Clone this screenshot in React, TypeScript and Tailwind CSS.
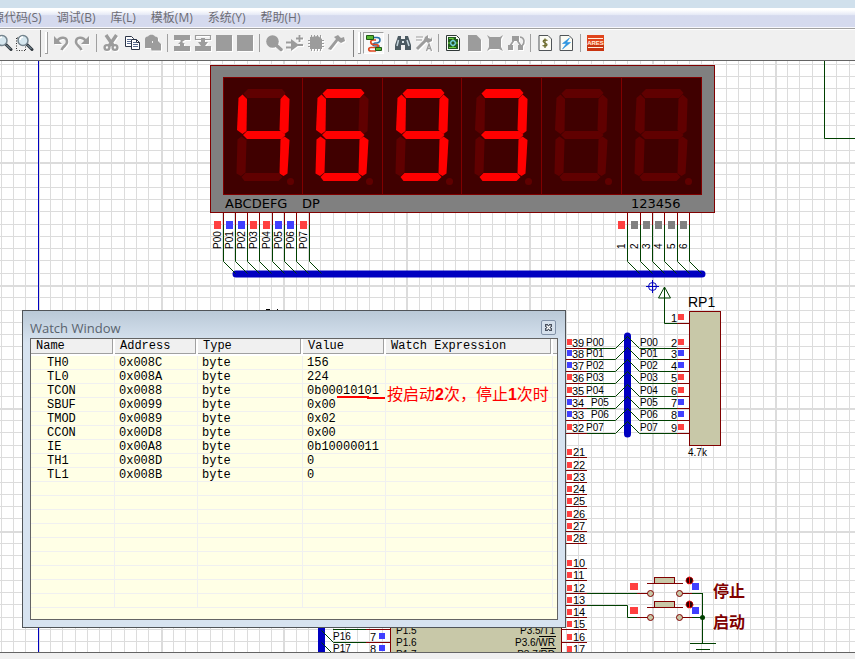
import { Fragment, type ReactNode } from "react";
import { clsx } from "clsx";

const WIRE = "#004000";
const PIN = "#800000";
const BUS = "#0000c0";
const BODY = "#c8c8a8";
const HIGH = "#ff4040";
const LOW = "#4040ff";
const FLOAT = "#808080";

const menus = ["源代码(S)", "调试(B)", "库(L)", "模板(M)", "系统(Y)", "帮助(H)"];

interface WatchItem {
  name: string;
  address: string;
  type: string;
  value: string;
}

const watchItems: WatchItem[] = [
  { name: "TH0", address: "0x008C", type: "byte", value: "156" },
  { name: "TL0", address: "0x008A", type: "byte", value: "224" },
  { name: "TCON", address: "0x0088", type: "byte", value: "0b00010101" },
  { name: "SBUF", address: "0x0099", type: "byte", value: "0x00" },
  { name: "TMOD", address: "0x0089", type: "byte", value: "0x02" },
  { name: "CCON", address: "0x00D8", type: "byte", value: "0x00" },
  { name: "IE", address: "0x00A8", type: "byte", value: "0b10000011" },
  { name: "TH1", address: "0x008D", type: "byte", value: "0" },
  { name: "TL1", address: "0x008B", type: "byte", value: "0" },
];

/* ---------- toolbar ---------- */

function Tool({ label, off, active, children }: { label: string; off?: boolean; active?: boolean; children: ReactNode }) {
  return (
    <button
      type="button"
      aria-label={label}
      title={label}
      className={clsx(
        "flex h-[22px] w-[21px] shrink-0 items-center justify-center",
        active && "border border-[#a0a0a0] border-r-white border-b-white bg-[#f8f8f8]"
      )}
    >
      <svg
        viewBox="0 0 20 20"
        className={clsx("h-5 w-5 shrink-0", off && "text-[#9c9c9c] drop-shadow-[1px_1px_0_#ffffff]")}
        fill="currentColor"
      >
        {children}
      </svg>
    </button>
  );
}

function Separator() {
  return (
    <div className="flex h-[18px] w-2 shrink-0 justify-center">
      <div className="w-px bg-[#a0a0a0]" />
    </div>
  );
}

function Gripper() {
  return (
    <div className="flex h-7 w-4 shrink-0 items-center justify-end gap-1 pr-[2px]">
      <div className="h-[27px] w-px bg-[#808080]" />
      <div className="h-[22px] w-[3px] border-r border-b border-[#a0a0a0] bg-white" />
    </div>
  );
}

const magnifier = (
  <>
    <path d="M13 11.500l5 5" stroke="#333a40" strokeWidth="3" strokeLinecap="round" />
    <path d="M13.500 12l4 4" stroke="#8fa8b4" strokeWidth="1" />
    <circle cx="9" cy="7.500" r="5" fill="#d5e6ee" stroke="#74848e" strokeWidth="1.500" />
    <path d="M6 7a3 3 0 0 1 3-3" stroke="#fff" strokeWidth="1.500" fill="none" />
  </>
);

const page = <path d="M4 2.500h9l3.500 3.500v11.500H4z" fill="#fbfbf4" stroke="#505458" />;

function Toolbar() {
  return (
    <div role="toolbar" className="flex h-[31px] items-center overflow-hidden border-b border-[#646464] bg-[#f0f0f0] pb-1">
      <div className="-ml-2 flex items-center">
        <Tool label="Zoom out">{magnifier}</Tool>
        <Tool label="Zoom area">
          <path d="M2.500 5v12.500h9" stroke="#303030" strokeDasharray="1 1.500" fill="none" />
          <path d="M3 5h4M11.500 17v-5" stroke="#303030" strokeDasharray="1 1.500" fill="none" />
          {magnifier}
        </Tool>
        <Gripper />
        <Tool label="Undo" off>
          <path d="M3 3v8h8z" />
          <path d="M6 8C9 3.500 16 3.500 16 9c0 3.500-4 4-5.500 8" fill="none" stroke="currentColor" strokeWidth="2.600" />
        </Tool>
        <Tool label="Redo" off>
          <path d="M17 3v8H9z" />
          <path d="M14 8C11 3.500 4 3.500 4 9c0 3.500 4 4 5.500 8" fill="none" stroke="currentColor" strokeWidth="2.600" />
        </Tool>
        <Separator />
        <Tool label="Cut" off>
          <path d="M5 2l7.500 11M15.500 2L8 13" stroke="currentColor" strokeWidth="3.400" />
          <circle cx="6" cy="14.500" r="2.400" fill="none" stroke="currentColor" strokeWidth="2.400" />
          <circle cx="14" cy="14.500" r="2.400" fill="none" stroke="currentColor" strokeWidth="2.400" />
        </Tool>
        <Tool label="Copy">
          <path d="M3.500 3.500h6l2 2v8h-8z" fill="#fff" stroke="#2c3548" />
          <path d="M5 6.500h4M5 8.500h4M5 10.500h4" stroke="#5a6c90" />
          <path d="M9.500 6.500h5l3 3v7h-8z" fill="#fff" stroke="#2c3548" />
          <path d="M11 9.500h3M11 11.500h5M11 13.500h5" stroke="#5a6c90" />
          <path d="M14.500 6.500v3h3" fill="none" stroke="#2c3548" />
        </Tool>
        <Tool label="Paste" off>
          <path d="M2 6c0-2 2-2.500 3-2.500 1-2.500 6-2.500 7 0 2 0 3 1 3 2.500v2l3 3v6.500H8.500L8 15H2z" />
          <path d="M9.500 8v2" stroke="#f0f0f0" />
        </Tool>
        <Separator />
        <Tool label="Block copy" off>
          <path d="M2 2h16v5h-5l-3 2 3 2h-1v2h6v5H2v-5h6v-2H6l3-3-1-1H2z" />
        </Tool>
        <Tool label="Block move" off>
          <path d="M2.500 2.500h15v4h-15z" fill="none" stroke="currentColor" strokeWidth="1.200" />
          <path d="M8 5h4v4h3l-3 4h6v5H2v-5h6L5 9h3z" />
        </Tool>
        <Tool label="Block rotate" off>
          <path d="M2 2h16v16H2z" />
        </Tool>
        <Tool label="Block delete" off>
          <path d="M2 2h16v16H2z" />
        </Tool>
        <Separator />
        <Tool label="Pick parts" off>
          <circle cx="8.500" cy="8.500" r="6.300" />
          <path d="M12 12l5 4.500" stroke="currentColor" strokeWidth="3.500" strokeLinecap="round" />
        </Tool>
        <Tool label="Make device" off>
          <path d="M6 6l8 6-8 6z" />
          <path d="M1 9.500h6M1 14.500h6M13 12h5M11 5.500h7M14.500 2v7" stroke="currentColor" strokeWidth="1.800" />
        </Tool>
        <Tool label="Packaging tool" off>
          <path d="M4 4l8-1 4 3v10H4z" />
          <path d="M5.500 2v16M8.500 2v16M11.500 2v16M14.500 2v16M2 7.500h16M2 10.500h16M2 13.500h16" stroke="currentColor" />
        </Tool>
        <Tool label="Decompose" off>
          <path d="M7 4l4-2 3 3 3-1 1 4-4 2-3-2L4 17l-3-1 8-10z" />
        </Tool>
        <Gripper />
        <Tool label="Wire autorouter" active>
          <path d="M9 4.500h4c4 0 4 5 0 5.500h-2c-3 1-3 3 1 3h3v2" fill="none" stroke="#2870a8" strokeWidth="1.500" />
          <path d="M12 7H9c-3 0-3 4 0 4.500h3c3 0 3 3 0 3H7c-3 0-3 3.500 0 3.500h5" fill="none" stroke="#e04820" strokeWidth="1.700" />
          <path d="M2.500 2.500h7v4h-7zM11.500 14.500h6v3h-6z" fill="#58b830" stroke="#205818" />
        </Tool>
        <Separator />
        <Tool label="Search and tag">
          <path d="M5 3h3v3h4V3h3l3 9v5h-6v-5H8v5H2v-5z" fill="#4c5a62" />
          <path d="M5.500 7L4 13M14 7l2 6" stroke="#c4d4dc" strokeWidth="1.500" />
          <path d="M9 8h2v2H9z" fill="#dde6ea" />
        </Tool>
        <Tool label="Property assignment" off>
          <path d="M2 4h7M2 7h6" stroke="currentColor" strokeWidth="1.200" />
          <path d="M3 16L13 6" stroke="currentColor" strokeWidth="3" />
          <path d="M11 4l3-2v3l3 1 1-2v4l-4 2-4-3z" />
          <path d="M12.500 18l2.500-7 2.500 7M13.500 15.500h3" fill="none" stroke="currentColor" strokeWidth="1.300" />
        </Tool>
        <Separator />
        <Tool label="Design explorer">
          <path d="M3.500 2.500h10l3 3v12h-13z" fill="#f8fbf4" stroke="#303838" />
          <path d="M5 4h8v2h2v10H5z" fill="#205820" />
          <path d="M6 5.500h4M6 14.500h7M10 5v10M5 10h10" stroke="#6bd03c" strokeWidth="1.200" />
          <circle cx="10" cy="10" r="2.300" fill="#205820" stroke="#7ad8e8" strokeWidth="1.200" />
        </Tool>
        <Tool label="New sheet" off>
          <path d="M4 2h8.500L17 6.500V18H4z" />
        </Tool>
        <Tool label="Remove sheet" off>
          <path d="M2 2l3 2h10l3-2-2 4v8l2 4-4-2H5l-3 2 2-4V6z" />
        </Tool>
        <Tool label="Exit to parent" off>
          <path d="M6 3h7v5H6zM2 12h5v5H2zM12 12h5v5h-5z" />
          <path d="M8 7l-4 6M11 7l4 6M14 4c5 1 5 6 2 9" fill="none" stroke="currentColor" strokeWidth="1.600" />
        </Tool>
        <Separator />
        <Tool label="Bill of materials">
          {page}
          <path d="M12.500 7.500c-4-1.500-6 1-2.500 2.500s2 4-2.500 2.500M10 5.500v9.500" fill="none" stroke="#6b6a28" strokeWidth="1.300" />
        </Tool>
        <Tool label="Electrical rules check">
          {page}
          <path d="M13.500 5L6.500 10.500h4L6.500 16l8-6.500h-4z" fill="#2a94e0" stroke="#2a94e0" strokeWidth=".6" />
        </Tool>
        <Separator />
        <Tool label="ARES">
          <path d="M2 2h17v16H2z" fill="#e0441c" />
          <path d="M2 12h17v6H2z" fill="#c93410" />
          <path d="M3 5.500h15M3 14.500h15" stroke="#ffeedd" />
          <text x="10.500" y="12" textAnchor="middle" className="fill-[#ffeedd] font-['Liberation_Sans',sans-serif] text-[6px] font-bold">
            ARES
          </text>
        </Tool>
      </div>
    </div>
  );
}

/* ---------- schematic ---------- */

// outlines of one seven segment digit, relative to the left edge of its cell
const segments: Record<string, string> = {
  a: "25,89 59,89 62.500,93 58,98 24,98 20.500,93.500",
  b: "61.500,94.500 66.500,99 65.500,131 61.500,134 56.500,130 57.500,99",
  c: "61.500,136.500 66.500,140 64.500,173.500 60.500,176 56.500,173.500 57.500,139.500",
  d: "18.500,177 22.500,173 56,173 59.500,177 55.500,181 21.500,181",
  e: "18.500,136.500 23.500,140 22.500,172.500 18,176 13.500,173.500 14.500,139.500",
  f: "19.500,94.500 24,99 23.500,131 19.500,134 14,130 15.500,98",
  g: "20,135 24,131 58.500,131 62.500,135 58.500,139 24,139",
};

const digits = [
  { x: 223, lit: "bcfg" },
  { x: 302, lit: "acdefg" },
  { x: 382, lit: "abcdfg" },
  { x: 461, lit: "abcdg" },
  { x: 541, lit: "" },
  { x: 621, lit: "" },
];

const segmentPins = [
  { x: 223, label: "P00", state: HIGH },
  { x: 235, label: "P01", state: LOW },
  { x: 247, label: "P02", state: LOW },
  { x: 259, label: "P03", state: HIGH },
  { x: 272, label: "P04", state: HIGH },
  { x: 284, label: "P05", state: LOW },
  { x: 296, label: "P06", state: LOW },
  { x: 309, label: "P07", state: HIGH },
];

const digitPins = [
  { x: 627, label: "1", state: HIGH },
  { x: 640, label: "2", state: FLOAT },
  { x: 652, label: "3", state: FLOAT },
  { x: 664, label: "4", state: FLOAT },
  { x: 677, label: "5", state: FLOAT },
  { x: 689, label: "6", state: FLOAT },
];

const port0 = [
  { y: 348, pin: "39", net: "P00", netX: 586, rp: "2", state: HIGH },
  { y: 359, pin: "38", net: "P01", netX: 586, rp: "3", state: LOW },
  { y: 371, pin: "37", net: "P02", netX: 586, rp: "4", state: LOW },
  { y: 383, pin: "36", net: "P03", netX: 586, rp: "5", state: HIGH },
  { y: 396, pin: "35", net: "P04", netX: 586, rp: "6", state: HIGH },
  { y: 408, pin: "34", net: "P05", netX: 591, rp: "7", state: LOW },
  { y: 420, pin: "33", net: "P06", netX: 591, rp: "8", state: LOW },
  { y: 433, pin: "32", net: "P07", netX: 586, rp: "9", state: HIGH },
];

const mcuPins = [
  { y: 457, pin: "21" }, { y: 470, pin: "22" }, { y: 482, pin: "23" }, { y: 494, pin: "24" },
  { y: 506, pin: "25" }, { y: 519, pin: "26" }, { y: 531, pin: "27" }, { y: 543, pin: "28" },
  { y: 568, pin: "10" }, { y: 580, pin: "11" }, { y: 593, pin: "12" }, { y: 605, pin: "13" },
  { y: 617, pin: "14" }, { y: 629, pin: "15" }, { y: 642, pin: "16" }, { y: 654, pin: "17" },
];

const port1 = [
  { y: 642, net: "P16", pin: "7" },
  { y: 654, net: "P17", pin: "8" },
];

const PITCH = 12.285;

function Grid() {
  const columns = Array.from({ length: 210 }, (_, i) => i - 53);
  const rows = Array.from({ length: 110 }, (_, i) => i - 19);
  return (
    <g fill="#dcdcdc">
      {columns.map((n) => (
        <rect key={n} x={Math.round(652 + n * PITCH)} y="0" width={n % 10 === 0 ? 2 : 1} height="1300" />
      ))}
      {rows.map((n) => (
        <rect key={n} x="0" y={Math.round(285 + n * PITCH)} width="2560" height={n % 10 === 0 ? 2 : 1} />
      ))}
    </g>
  );
}

function Pins({ pins }: { pins: typeof segmentPins }) {
  return (
    <>
      {pins.map((p) => (
        <Fragment key={p.label}>
          <path d={`M${p.x + 0.5} 213V225`} stroke={PIN} fill="none" />
          <path d={`M${p.x + 0.5} 225V261.500l12 12`} stroke={WIRE} fill="none" />
          <rect x={p.x - 9} y="221" width="7" height="8" fill={p.state} />
          <text transform={`translate(${p.x - 2} 249) rotate(-90)`}>{p.label}</text>
        </Fragment>
      ))}
    </>
  );
}

function Display() {
  return (
    <>
      <rect x="210.500" y="65.500" width="504" height="147" fill="#808080" stroke={PIN} />
      <rect x="223.500" y="77.500" width="478" height="117" fill="#400000" stroke={PIN} />
      {digits.map((d) => (
        <g key={d.x} transform={`translate(${d.x} 0)`}>
          {d.x > 223 && <path d="M.5 78v116" stroke={PIN} />}
          {Object.entries(segments).map(([name, points]) => (
            <polygon key={name} points={points} fill={d.lit.includes(name) ? "#ff0000" : "#600000"} />
          ))}
          <circle cx="67.500" cy="181.500" r="3.500" fill="#600000" />
        </g>
      ))}
      <g className="font-['DejaVu_Sans',sans-serif] text-[13px]">
        <text x="225" y="208">ABCDEFG</text>
        <text x="302" y="208">DP</text>
        <text x="631" y="208">123456</text>
      </g>
    </>
  );
}

function PushButton({ y }: { y: number }) {
  return (
    <g transform={`translate(0 ${y})`}>
      <rect x="654.500" y="-15.500" width="20" height="6" fill={BODY} stroke={PIN} />
      <path d="M647 -9.500h36M637 .5h11M682 .5h10" stroke={PIN} />
      <path d="M692 .5h11" stroke={WIRE} />
      <circle cx="650.500" cy=".5" r="3" fill={BODY} stroke={PIN} />
      <circle cx="679.500" cy=".5" r="3" fill={BODY} stroke={PIN} />
      <circle cx="689.500" cy="-12.500" r="3.500" fill="#300000" stroke="#ff0000" strokeDasharray="2 1" />
      <path d="M689.500 -16v7" stroke="#ff0000" />
      <rect x="630" y="-10" width="8" height="7" fill={HIGH} />
      <rect x="692" y="-10" width="7" height="7" fill={LOW} />
    </g>
  );
}

function Schematic() {
  return (
    <svg className="h-full w-full bg-white font-['Liberation_Sans',sans-serif] text-[10px]" role="img" aria-label="Schematic">
      {/* sheet coordinates start below the menu and the toolbar */}
      <g transform="translate(0 -61)">
        <Grid />
        <path d="M38.500 61V1300" stroke={BUS} />
        <path d="M824.500 61v77.500H2560" stroke={WIRE} fill="none" />

        <path d="M236 274H702M627.500 336V434" stroke={BUS} strokeWidth="7" strokeLinecap="round" />
        <Display />
        <Pins pins={segmentPins} />
        <Pins pins={digitPins} />

        <g stroke={BUS} fill="none">
          <circle cx="652.500" cy="286.500" r="4" />
          <path d="M646 286.500h13M652.500 280v13" />
        </g>

        {/* pull-up network */}
        <path d="M664.500 287l-6 11h12zM664.500 287v36.500h13" stroke={WIRE} fill="none" />
        <path d="M677 323.500h12" stroke={PIN} />
        <rect x="689.500" y="311.500" width="31" height="134" fill={BODY} stroke={PIN} />
        <rect x="678" y="314" width="6" height="6" fill={HIGH} />
        <text x="688" y="307" className="text-[14px]">RP1</text>
        <text x="688" y="456">4.7k</text>
        <text x="677" y="322" textAnchor="end" className="text-[11px]">1</text>
        {port0.map((p) => (
          <g key={p.net} transform={`translate(0 ${p.y})`}>
            <path d="M566 .5h21M677 .5h12" stroke={PIN} />
            <path d="M587 .5h28.500l12-12l12 12h37.500" stroke={WIRE} fill="none" />
            <rect x="567" y="-9" width="5" height="6" fill={p.state} />
            <rect x="678" y="-9" width="6" height="6" fill={p.state} />
            <text x="572" y="-1" className="text-[11px]">{p.pin}</text>
            <text x={p.netX} y="-2">{p.net}</text>
            <text x="640" y="-2">{p.net}</text>
            <text x="677" y="-1" textAnchor="end" className="text-[11px]">{p.rp}</text>
          </g>
        ))}

        {/* microcontroller */}
        <rect x="390.500" y="480.500" width="171" height="240" fill={BODY} stroke={PIN} />
        <text x="396" y="634">P1.5</text>
        <text x="396" y="646">P1.6</text>
        <text x="396" y="658">P1.7</text>
        <g textAnchor="end">
          <text x="555" y="634">P3.5/T1</text>
          <text x="555" y="646">P3.6/WR</text>
          <text x="555" y="658">P3.7/RD</text>
        </g>
        <path d="M539 636.500h17M541 648.500h15" stroke="#000" />
        {mcuPins.map((p) => (
          <g key={p.pin} transform={`translate(0 ${p.y})`}>
            <path d="M562 .5h25" stroke={PIN} />
            <rect x="567" y="-8" width="5" height="6" fill={HIGH} />
            <text x="573" y="-1" className="text-[11px]">{p.pin}</text>
          </g>
        ))}
        <path d="M321.500 560V700" stroke={BUS} strokeWidth="7" />
        <path d="M333 629.500h33" stroke={WIRE} />
        <path d="M366 629.500h24" stroke={PIN} />
        {port1.map((p) => (
          <g key={p.net} transform={`translate(0 ${p.y})`}>
            <path d="M321.500 -11.500l12 12H366" stroke={WIRE} fill="none" />
            <path d="M366 .5h24" stroke={PIN} />
            <text x="333" y="-2">{p.net}</text>
            <text x="370" y="-1" className="text-[11px]">{p.pin}</text>
            <rect x="379" y="-9" width="6" height="6" fill={LOW} />
          </g>
        ))}

        {/* start and stop keys */}
        <path d="M587 593.500h50M587 605.500h40.500v12h10M702.500 593v50M690 643.500h26M696 649.500h14" stroke={WIRE} fill="none" />
        <PushButton y={593} />
        <PushButton y={617} />
        <circle cx="702.500" cy="617.500" r="2.500" fill={WIRE} />
        <g fill={PIN} className="font-['Noto_Sans_CJK_SC',sans-serif] text-[16px] font-bold">
          <text x="713" y="597">停止</text>
          <text x="713" y="628">启动</text>
        </g>
        <path d="M266 309.500h4M277 309.500h1" stroke="#000" />
      </g>
    </svg>
  );
}

/* ---------- watch window ---------- */

const headings = ["Name", "Address", "Type", "Value", "Watch Expression", ""];

function WatchWindow() {
  return (
    <section
      aria-label="Watch Window"
      className="absolute top-[249px] left-[22px] flex h-[318px] w-[544px] flex-col border border-[#505458] bg-[#d7e3f0] bg-linear-to-b from-[#bac9d7] to-[#d7e3f0] to-10% px-[7px] pb-[7px]"
    >
      <header className="flex h-[27px] shrink-0 items-center justify-between pt-[6px] pr-[2px]">
        <h2 className="font-['Open_Sans','Noto_Sans',sans-serif] text-[13px] leading-4 text-[#59636e]">Watch Window</h2>
        <button type="button" aria-label="Close" className="flex h-[15px] w-[15px] items-center justify-center rounded-[2px] border border-[#8292a8] bg-[#d5e0ec]">
          <svg viewBox="0 0 9 9" className="h-[9px] w-[9px] shrink-0" fill="none">
            <path d="M1 1h3v1h1V1h3v3H7v1h1v3H5V7H4v1H1V5h1V4H1z" fill="#4a5260" />
            <path d="M2.500 2.500l4 4M6.500 2.500l-4 4" stroke="#ffffff" strokeWidth="1.200" />
          </svg>
        </button>
      </header>
      <div className="min-h-0 flex-1 overflow-hidden border border-[#646464] bg-[#ffffe6]">
        <table className="w-full table-fixed border-separate border-spacing-0 text-left font-['Liberation_Mono',monospace] text-[12px] leading-[12px] text-black">
          <colgroup>
            <col className="w-[84px]" />
            <col className="w-[83px]" />
            <col className="w-[105px]" />
            <col className="w-[83px]" />
            <col className="w-[167px]" />
            <col />
          </colgroup>
          <thead>
            <tr className="h-[17px] bg-white">
              {headings.map((h) => (
                <th key={h} scope="col" className="p-0 pb-[2px] font-normal">
                  <div className="mr-[2px] h-[15px] border-r border-b border-[#a0a0a0] bg-[#f0f0f0] pl-[5px] leading-[15px]">{h}</div>
                </th>
              ))}
            </tr>
          </thead>
          <tbody>
            {Array.from({ length: 18 }, (_, i) => {
              const item = watchItems[i];
              return (
                <tr key={i} className="h-[14px]">
                  <td className="border-r border-b border-[#f0f0f0] p-0 pt-px pl-4">{item?.name}</td>
                  <td className="border-r border-b border-[#f0f0f0] p-0 pt-px pl-1">{item?.address}</td>
                  <td className="border-r border-b border-[#f0f0f0] p-0 pt-px pl-1">{item?.type}</td>
                  <td className="border-r border-b border-[#f0f0f0] p-0 pt-px pl-1">{item?.value}</td>
                  <td className="border-r border-b border-[#f0f0f0] p-0" />
                  <td className="border-b border-[#f0f0f0] p-0" />
                </tr>
              );
            })}
          </tbody>
        </table>
      </div>
    </section>
  );
}

function Note() {
  return (
    <div className="absolute top-[324px] left-[336px] flex items-center text-[#ff0000]">
      <svg viewBox="0 0 50 20" className="h-5 w-[50px]" fill="none">
        <path d="M1 12H32V13H49" stroke="currentColor" strokeWidth="2" />
      </svg>
      <p className="ml-px font-['Liberation_Sans','Noto_Sans_CJK_SC',sans-serif] text-[16px] leading-5 whitespace-nowrap">
        按启动<b>2</b>次，停止<b>1</b>次时
      </p>
    </div>
  );
}

export default function App() {
  return (
    <div className="flex h-screen flex-col overflow-hidden bg-[#f0f0f0]">
      <div className="h-2 shrink-0 bg-[#d0e0ec]" />
      <nav className="flex h-[19px] shrink-0 items-center overflow-hidden bg-linear-to-b from-white from-10% via-[#e6eaf6] via-35% to-[#d5daee] to-40% font-['Open_Sans','Noto_Sans_CJK_SC',sans-serif] text-[12px] leading-4 text-[#6c6c74]">
        <div className="-ml-2 flex gap-[15px]">
          {menus.map((m) => (
            <button key={m} type="button" className="whitespace-nowrap">
              {m}
            </button>
          ))}
        </div>
      </nav>
      <div className="h-[3px] shrink-0 border-t border-b border-t-[#f8f8fc] border-b-white bg-[#a0a0a0]" />
      <Toolbar />
      <main className="relative min-h-0 flex-1 overflow-hidden">
        <Schematic />
        <WatchWindow />
        <Note />
      </main>
      <footer className="h-[7px] shrink-0 border-t border-[#646464] bg-[#f0f0f0]" />
    </div>
  );
}
